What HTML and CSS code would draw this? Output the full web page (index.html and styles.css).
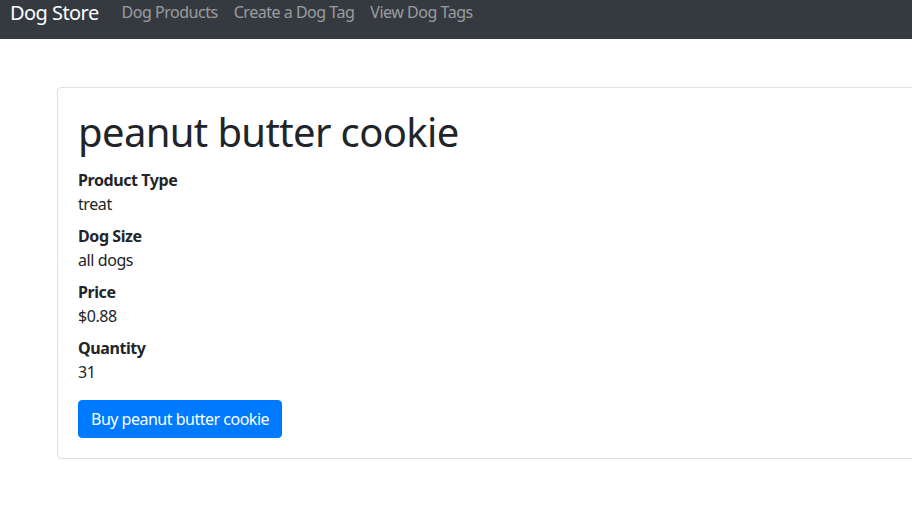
FILE: index.html
```html
<!DOCTYPE html>
<html lang="en">
<head>
<meta charset="utf-8">
<title>Dog Store</title>
<link rel="stylesheet" href="styles.css">
</head>
<body>
<nav class="navbar">
  <a class="brand" href="#">Dog Store</a>
  <ul class="nav-links">
    <li><a class="nav-link" href="#">Dog Products</a></li>
    <li><a class="nav-link" href="#">Create a Dog Tag</a></li>
    <li><a class="nav-link" href="#">View Dog Tags</a></li>
  </ul>
</nav>
<main class="page">
  <section class="card">
    <div class="card-body">
      <h1 class="card-title">peanut butter cookie</h1>
      <dl class="details">
        <dt>Product Type</dt>
        <dd>treat</dd>
        <dt>Dog Size</dt>
        <dd>all dogs</dd>
        <dt>Price</dt>
        <dd>$0.88</dd>
        <dt>Quantity</dt>
        <dd>31</dd>
      </dl>
      <button class="btn-primary" type="button">Buy peanut butter cookie</button>
    </div>
  </section>
</main>
</body>
</html>
```
FILE: styles.css
```css
* { box-sizing: border-box; }
html, body {
  margin: 0;
  padding: 0;
  overflow-x: hidden;
  background: #fff;
}
body {
  font-family: "Noto Sans", "Open Sans", sans-serif;
  font-size: 16px;
  line-height: 24px;
  letter-spacing: -0.026em;
  color: #212529;
}
.navbar {
  display: flex;
  align-items: flex-start;
  height: 39px;
  background: #343a40;
  padding: 0 0 0 10px;
}
.brand {
  font-size: 20px;
  line-height: 22px;
  padding-top: 2px;
  color: #fff;
  text-decoration: none;
  margin-right: 15px;
  letter-spacing: -0.028em;
}
.nav-links {
  display: flex;
  list-style: none;
  margin: 0;
  padding: 0;
}
.nav-link {
  display: block;
  padding: 0 8px;
  line-height: 24px;
  letter-spacing: -0.03em;
  color: rgba(255, 255, 255, 0.5);
  text-decoration: none;
}
.page {
  padding: 48px 0 0 57px;
}
.card {
  margin-right: -40px;
  border: 1px solid rgba(0, 0, 0, 0.125);
  border-radius: 4px;
}
.card-body {
  padding: 20px;
}
.card-title {
  margin: 0 0 12px;
  font-size: 40px;
  line-height: 48px;
  font-weight: 400;
  letter-spacing: -0.016em;
}
.details {
  margin: 0 0 16px;
}
.details dt {
  font-weight: 700;
}
.details dd {
  margin: 0 0 8px;
}
.btn-primary {
  font-family: inherit;
  font-size: 16px;
  line-height: 24px;
  letter-spacing: -0.031em;
  padding: 6px 12px;
  color: #fff;
  background: #007bff;
  border: 1px solid #007bff;
  border-radius: 4px;
  cursor: pointer;
}
```
